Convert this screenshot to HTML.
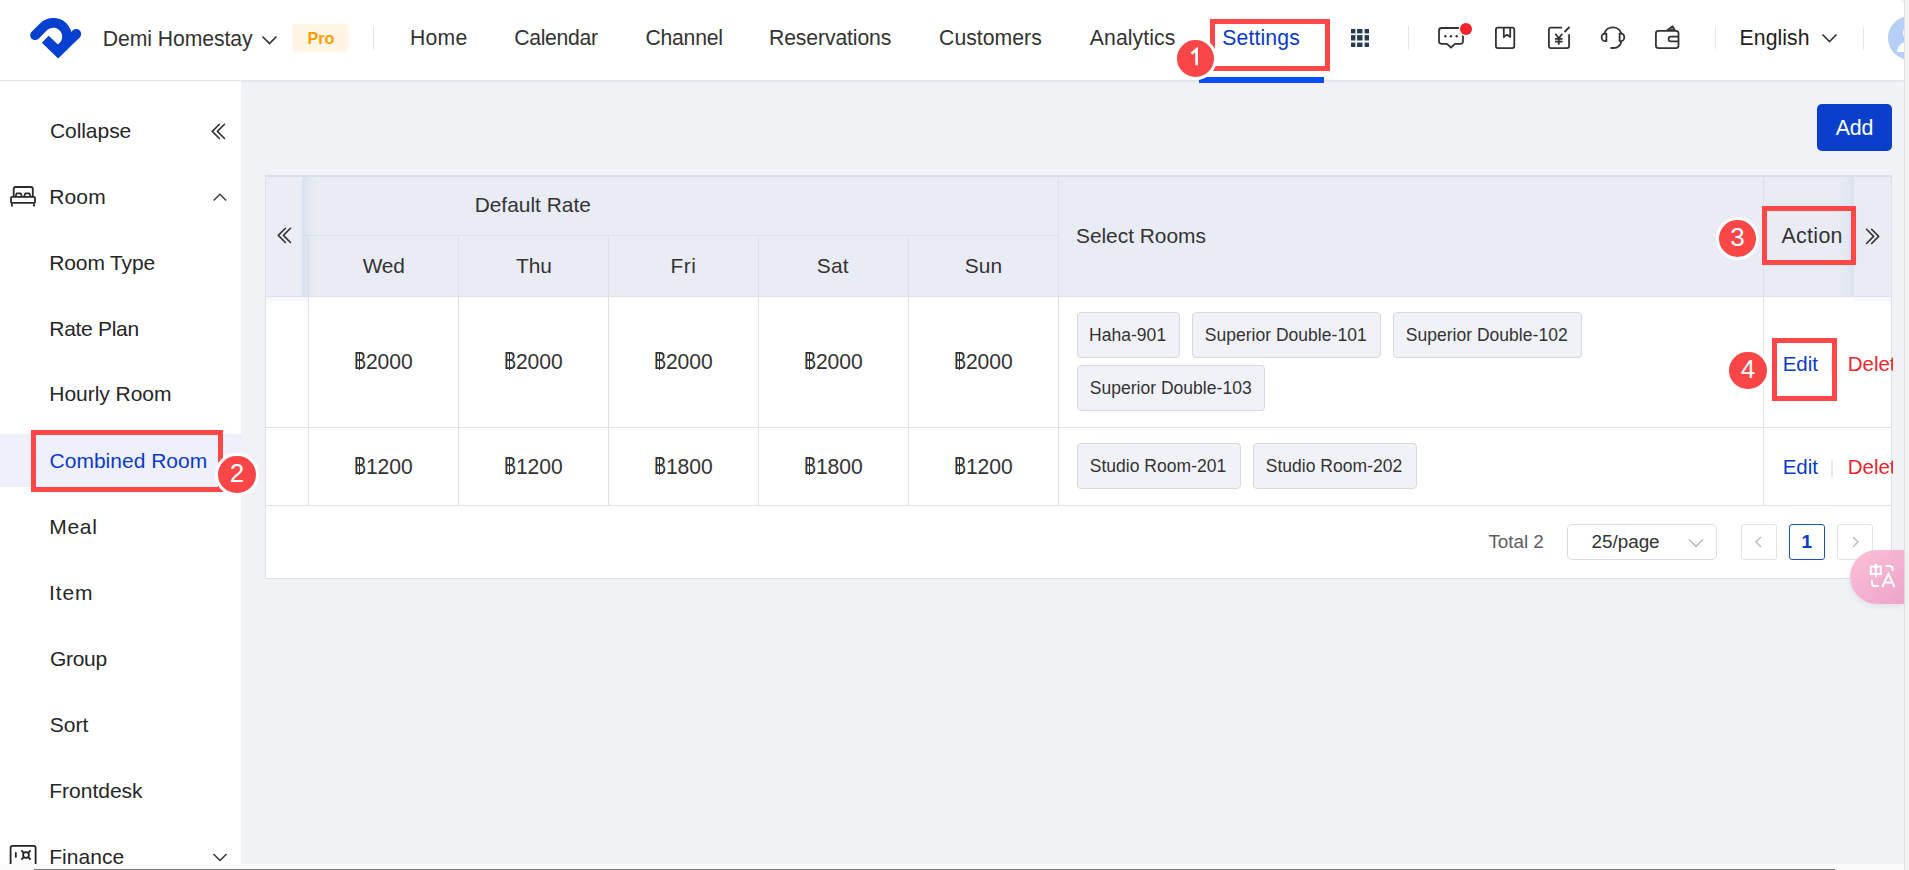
<!DOCTYPE html><html><head><meta charset="utf-8"><style>
html,body{margin:0;padding:0;width:1909px;height:870px;overflow:hidden;background:#fff}
body{position:relative;font-family:"Liberation Sans",sans-serif}
.t{position:absolute;white-space:nowrap}
.r{position:absolute}
.bm{display:inline-block;width:0;height:0;vertical-align:baseline}
</style></head><body>
<div class="r" style="left:0px;top:0px;width:1904px;height:864px;background:#f0f2f5"></div>
<div class="r" style="left:0px;top:0px;width:1904px;height:80px;background:#fff;border-bottom:1px solid #e1e4ea;border-top-right-radius:6px;box-shadow:0 1px 2px rgba(0,0,0,.05)"></div>
<svg class="r" style="left:0;top:0" width="100" height="80" viewBox="0 0 100 80">
<g fill="none" stroke="#0540d0" stroke-width="9.8">
<path d="M35.11 35.21 L43.41 26.91 A13.85 13.85 0 1 1 59.05 49.25" stroke-linecap="round"/>
<path d="M45.3 39.2 L58.1 51.6 L76.25 33.95" stroke-linecap="butt" stroke-linejoin="miter"/>
</g><circle cx="76.25" cy="33.95" r="4.9" fill="#0540d0"/></svg>
<div class="t" id="demi" style="left:102.80px;top:27.51px;font-size:21.20px;line-height:21.20px;color:#333;font-weight:normal;letter-spacing:-0.072px;">Demi Homestay<span class="bm"></span></div>
<svg class="r" style="left:260px;top:32px" width="20" height="14" viewBox="0 0 20 14"><path d="M2.5 4.5 L9.5 11.5 L16.5 4.5" fill="none" stroke="#333" stroke-width="1.6"/></svg>
<div class="r" style="left:292px;top:24px;width:57px;height:28px;background:#fff6e6;border-radius:4px"></div>
<div class="t" id="pro" style="left:307.40px;top:30.49px;font-size:16.20px;line-height:16.20px;color:#ff9d00;font-weight:bold;letter-spacing:0.000px;">Pro<span class="bm"></span></div>
<div class="r" style="left:373px;top:26px;width:1px;height:24px;background:#e3e6ec"></div>
<div class="t" id="home" style="left:409.88px;top:26.90px;font-size:21.20px;line-height:21.20px;color:#333;font-weight:normal;letter-spacing:0.283px;">Home<span class="bm"></span></div>
<div class="t" id="calendar" style="left:514.13px;top:27.11px;font-size:21.20px;line-height:21.20px;color:#333;font-weight:normal;letter-spacing:-0.290px;">Calendar<span class="bm"></span></div>
<div class="t" id="channel" style="left:645.40px;top:27.10px;font-size:21.20px;line-height:21.20px;color:#333;font-weight:normal;letter-spacing:-0.212px;">Channel<span class="bm"></span></div>
<div class="t" id="reservations" style="left:769.04px;top:27.11px;font-size:21.20px;line-height:21.20px;color:#333;font-weight:normal;letter-spacing:-0.124px;">Reservations<span class="bm"></span></div>
<div class="t" id="customers" style="left:939.12px;top:27.10px;font-size:21.20px;line-height:21.20px;color:#333;font-weight:normal;letter-spacing:0.028px;">Customers<span class="bm"></span></div>
<div class="t" id="analytics" style="left:1089.86px;top:27.11px;font-size:21.20px;line-height:21.20px;color:#333;font-weight:normal;letter-spacing:0.073px;">Analytics<span class="bm"></span></div>
<div class="t" id="settings" style="left:1222.19px;top:26.71px;font-size:21.20px;line-height:21.20px;color:#0a3acc;font-weight:normal;letter-spacing:0.146px;">Settings<span class="bm"></span></div>
<div class="r" style="left:1199px;top:77px;width:125px;height:6px;background:#0a4bff;border-radius:3px 0 0 0"></div>
<svg class="r" style="left:1350.8px;top:28.8px" width="18" height="18" viewBox="0 0 18 18"><g fill="#243a55"><rect x="0" y="0" width="4.4" height="4.4"/><rect x="6.1" y="0" width="5.4" height="4.4"/><rect x="13.6" y="0" width="4.4" height="4.4"/><rect x="0" y="6.1" width="4.4" height="5.4"/><rect x="6.1" y="6.1" width="5.4" height="5.4"/><rect x="13.6" y="6.1" width="4.4" height="5.4"/><rect x="0" y="13.6" width="4.4" height="4.4"/><rect x="6.1" y="13.6" width="5.4" height="4.4"/><rect x="13.6" y="13.6" width="4.4" height="4.4"/></g></svg>
<div class="r" style="left:1408px;top:26px;width:1px;height:24px;background:#e3e6ec"></div>
<svg class="r" style="left:1430px;top:20px" width="50" height="32" viewBox="1430 20 50 32">
<g fill="none" stroke="#333" stroke-width="1.8" stroke-linejoin="round">
<path d="M1443 43.8 H1441.5 A2.5 2.5 0 0 1 1439 41.3 V30.5 A2.5 2.5 0 0 1 1441.5 28 H1460.5 A2.5 2.5 0 0 1 1463 30.5 V41.3 A2.5 2.5 0 0 1 1460.5 43.8 H1455 L1451 47.5 L1447 43.8 Z"/>
</g>
<g fill="#333"><circle cx="1445.3" cy="36.3" r="1.2"/><circle cx="1451" cy="36.3" r="1.2"/><circle cx="1456.7" cy="36.3" r="1.2"/></g>
<circle cx="1466" cy="29" r="7.3" fill="#fff"/><circle cx="1466" cy="29" r="6" fill="#f5222d"/>
</svg>
<svg class="r" style="left:1490px;top:20px" width="32" height="34" viewBox="1490 20 32 34">
<g fill="none" stroke="#333" stroke-width="1.8" stroke-linejoin="round">
<rect x="1495.9" y="27.7" width="18.4" height="20.4" rx="2"/>
<path d="M1503.8 28 V37 L1507 34.8 L1510.2 37 V28"/>
</g></svg>
<svg class="r" style="left:1544px;top:20px" width="32" height="34" viewBox="1544 20 32 34">
<g fill="none" stroke="#333" stroke-width="1.8" stroke-linejoin="round">
<path d="M1562 27.7 H1550.9 A2 2 0 0 0 1548.9 29.7 V46.1 A2 2 0 0 0 1550.9 48.1 H1567.1 A2 2 0 0 0 1569.1 46.1 V34.2"/>
<path d="M1564.5 32 L1569.5 27"/>
<path d="M1555.3 33.8 L1558.8 38.2 L1562.3 33.8 M1555 38.8 H1562.6 M1555 41.6 H1562.6 M1558.8 38.2 V44.7"/>
</g></svg>
<svg class="r" style="left:1596px;top:20px" width="34" height="34" viewBox="1596 20 34 34">
<g fill="none" stroke="#333" stroke-width="1.8" stroke-linejoin="round" stroke-linecap="round">
<path d="M1604.3 33.4 A9.05 9.05 0 0 1 1621.3 33.4"/>
<path d="M1606.4 33.6 H1604.8 A3.1 3.75 0 0 0 1604.8 41.1 H1606.4 Z"/>
<path d="M1619.6 33.6 H1621.2 A3.1 3.75 0 0 1 1621.2 41.1 H1619.6 Z"/>
<path d="M1621.3 41.6 A7.6 7.6 0 0 1 1613.6 48 H1611.2"/>
</g></svg>
<svg class="r" style="left:1650px;top:20px" width="34" height="34" viewBox="1650 20 34 34">
<g fill="none" stroke="#333" stroke-width="1.8" stroke-linejoin="round">
<rect x="1655.9" y="30.8" width="22.6" height="17.3" rx="2.5"/>
<path d="M1678.5 36.6 H1671 A2.4 2.4 0 0 0 1671 41.4 H1678.5"/>
<path d="M1667.2 30.2 L1672.6 26.3 L1674.8 30.2 Z" fill="#aaa"/>
</g></svg>
<div class="r" style="left:1715px;top:27px;width:1px;height:22px;background:#e3e6ec"></div>
<div class="t" id="english" style="left:1739.61px;top:27.31px;font-size:21.20px;line-height:21.20px;color:#1f1f1f;font-weight:normal;letter-spacing:0.068px;">English<span class="bm"></span></div>
<svg class="r" style="left:1820px;top:31px" width="20" height="14" viewBox="0 0 20 14"><path d="M2.5 3.5 L9.5 10.5 L16.5 3.5" fill="none" stroke="#333" stroke-width="1.6"/></svg>
<div class="r" style="left:1863px;top:27px;width:1px;height:23px;background:#e3e6ec"></div>
<div class="r" style="left:1880px;top:0;width:24px;height:80px;overflow:hidden">
<svg style="position:absolute;left:8px;top:16px" width="44" height="44" viewBox="0 0 44 44"><circle cx="22" cy="22" r="22" fill="#b6cff8"/><circle cx="22" cy="17" r="7" fill="#fff"/><path d="M9 36 A13 11 0 0 1 35 36 Z" fill="#fff"/></svg></div>
<div class="r" style="left:1904px;top:0px;width:5px;height:870px;background:#f4f4f4;border-left:1px solid #e2e2e2;box-sizing:border-box"></div>
<div class="r" style="left:0px;top:864px;width:1904px;height:6px;background:#fafafa"></div>
<div class="r" style="left:34px;top:869px;width:1801px;height:1px;background:#7a7a7a"></div>
<div class="r" style="left:0px;top:81px;width:241px;height:783px;background:#fff"></div>
<div class="t" id="collapse" style="left:49.88px;top:119.50px;font-size:21.00px;line-height:21.00px;color:#262626;font-weight:normal;letter-spacing:-0.046px;">Collapse<span class="bm"></span></div>
<svg class="r" style="left:208px;top:120px" width="22" height="22" viewBox="0 0 22 22"><path d="M11.4 4.25 L4.3 11.4 L11.4 18.55 M16.5 4.25 L9.4 11.4 L16.5 18.55" fill="none" stroke="#333" stroke-width="1.6" stroke-linecap="round" stroke-linejoin="round"/></svg>
<svg class="r" style="left:5px;top:182px" width="36" height="30" viewBox="5 182 36 30">
<g fill="none" stroke="#2a2a2a" stroke-width="1.8" stroke-linejoin="round">
<path d="M13.7 196.5 V189 A2 2 0 0 1 15.7 187 H30.8 A2 2 0 0 1 32.8 189 V196.5"/>
<path d="M15.7 196 L16.7 193.3 H20.7 L21.8 196 M24.3 196 L25.3 193.3 H29.3 L30.4 196"/>
<rect x="11" y="196.9" width="24" height="6" rx="1"/>
<path d="M11.9 203.5 V206.6 M34 203.5 V206.6"/>
</g></svg>
<div class="t" id="room" style="left:49.25px;top:185.81px;font-size:21.00px;line-height:21.00px;color:#262626;font-weight:normal;letter-spacing:0.133px;">Room<span class="bm"></span></div>
<svg class="r" style="left:210px;top:189px" width="20" height="16" viewBox="0 0 20 16"><path d="M3.6 11.4 L9.9 5.2 L16.2 11.4" fill="none" stroke="#3a3a3a" stroke-width="1.4"/></svg>
<div class="r" style="left:0px;top:434px;width:241px;height:53px;background:#eef1fb"></div>
<div class="t" id="roomtype" style="left:49.30px;top:252.01px;font-size:21.00px;line-height:21.00px;color:#262626;font-weight:normal;letter-spacing:-0.147px;">Room Type<span class="bm"></span></div>
<div class="t" id="rateplan" style="left:49.35px;top:317.90px;font-size:21.00px;line-height:21.00px;color:#262626;font-weight:normal;letter-spacing:-0.301px;">Rate Plan<span class="bm"></span></div>
<div class="t" id="hourly" style="left:49.29px;top:383.40px;font-size:21.00px;line-height:21.00px;color:#262626;font-weight:normal;letter-spacing:-0.036px;">Hourly Room<span class="bm"></span></div>
<div class="t" id="combined" style="left:49.58px;top:449.90px;font-size:21.00px;line-height:21.00px;color:#0a3acc;font-weight:normal;letter-spacing:0.001px;">Combined Room<span class="bm"></span></div>
<div class="t" id="meal" style="left:49.26px;top:515.91px;font-size:21.00px;line-height:21.00px;color:#262626;font-weight:normal;letter-spacing:0.717px;">Meal<span class="bm"></span></div>
<div class="t" id="item" style="left:49.08px;top:582.21px;font-size:21.00px;line-height:21.00px;color:#262626;font-weight:normal;letter-spacing:0.825px;">Item<span class="bm"></span></div>
<div class="t" id="group" style="left:49.97px;top:647.71px;font-size:21.00px;line-height:21.00px;color:#262626;font-weight:normal;letter-spacing:-0.296px;">Group<span class="bm"></span></div>
<div class="t" id="sort" style="left:49.65px;top:713.71px;font-size:21.00px;line-height:21.00px;color:#262626;font-weight:normal;letter-spacing:0.048px;">Sort<span class="bm"></span></div>
<div class="t" id="frontdesk" style="left:49.29px;top:779.80px;font-size:21.00px;line-height:21.00px;color:#262626;font-weight:normal;letter-spacing:-0.010px;">Frontdesk<span class="bm"></span></div>
<svg class="r" style="left:5px;top:840px" width="36" height="24" viewBox="5 840 36 24">
<g fill="none" stroke="#222" stroke-width="1.8" stroke-linejoin="round">
<path d="M10.6 864 V847.8 A2 2 0 0 1 12.6 845.8 H33.6 A2 2 0 0 1 35.6 847.8 V864"/>
<path d="M15.8 852.2 V857.6"/>
<path d="M21.4 850.4 L23.6 852.6 M30.6 850.4 L28.4 852.6 M21.4 859.6 L23.6 857.4 M30.6 859.6 L28.4 857.4"/>
<circle cx="26" cy="855" r="2.9"/>
</g></svg>
<div class="t" id="finance" style="left:49.28px;top:845.90px;font-size:21.00px;line-height:21.00px;color:#262626;font-weight:normal;letter-spacing:0.018px;">Finance<span class="bm"></span></div>
<svg class="r" style="left:210px;top:850px" width="20" height="14" viewBox="0 0 20 14"><path d="M3.5 4 L10 10.5 L16.5 4" fill="none" stroke="#333" stroke-width="1.5"/></svg>
<div class="r" style="left:1817px;top:104px;width:75px;height:47px;background:#0a3fcc;border-radius:5px"></div>
<div class="t" id="add" style="left:1835.73px;top:117.80px;font-size:21.40px;line-height:21.40px;color:#fff;font-weight:normal;letter-spacing:-0.189px;">Add<span class="bm"></span></div>
<div class="r" style="left:265px;top:175px;width:1627px;height:404px;background:#fff;border:1px solid #dde2ea;box-sizing:border-box"></div>
<div class="r" style="left:266px;top:176px;width:1625px;height:120px;background:#e9ecf4"></div>
<div class="r" style="left:266px;top:176px;width:36px;height:120px;background:#eaedf5"></div>
<div class="r" style="left:302px;top:235px;width:756px;height:1px;background:#dde2ea"></div>
<div class="r" style="left:266px;top:296px;width:1625px;height:1px;background:#dde2ea"></div>
<div class="r" style="left:308px;top:236px;width:1px;height:60px;background:#dde2ea"></div>
<div class="r" style="left:458px;top:236px;width:1px;height:60px;background:#dde2ea"></div>
<div class="r" style="left:608px;top:236px;width:1px;height:60px;background:#dde2ea"></div>
<div class="r" style="left:758px;top:236px;width:1px;height:60px;background:#dde2ea"></div>
<div class="r" style="left:908px;top:236px;width:1px;height:60px;background:#dde2ea"></div>
<div class="r" style="left:1058px;top:176px;width:1px;height:120px;background:#dde2ea"></div>
<div class="r" style="left:1763px;top:176px;width:1px;height:330px;background:#dde2ea"></div>
<div class="r" style="left:308px;top:297px;width:1px;height:209px;background:#dde2ea"></div>
<div class="r" style="left:458px;top:297px;width:1px;height:209px;background:#dde2ea"></div>
<div class="r" style="left:608px;top:297px;width:1px;height:209px;background:#dde2ea"></div>
<div class="r" style="left:758px;top:297px;width:1px;height:209px;background:#dde2ea"></div>
<div class="r" style="left:908px;top:297px;width:1px;height:209px;background:#dde2ea"></div>
<div class="r" style="left:1058px;top:297px;width:1px;height:209px;background:#dde2ea"></div>
<div class="r" style="left:266px;top:427px;width:1625px;height:1px;background:#dde2ea"></div>
<div class="r" style="left:266px;top:505px;width:1625px;height:1px;background:#dde2ea"></div>
<div class="r" style="left:302px;top:176px;width:15px;height:120px;background:linear-gradient(90deg,rgba(140,155,205,.15),rgba(140,155,205,.05) 50%,rgba(140,155,205,0))"></div>
<div class="r" style="left:1839px;top:176px;width:15px;height:120px;background:linear-gradient(270deg,rgba(140,155,205,.15),rgba(140,155,205,.05) 50%,rgba(140,155,205,0))"></div>
<div class="r" style="left:265px;top:175px;width:1627px;height:2px;background:#d9dde6"></div>
<div class="r" style="left:266px;top:297px;width:42px;height:9px;background:linear-gradient(180deg,rgba(140,155,205,.10),rgba(140,155,205,0))"></div>
<div class="r" style="left:1854px;top:297px;width:37px;height:9px;background:linear-gradient(180deg,rgba(140,155,205,.10),rgba(140,155,205,0))"></div>
<svg class="r" style="left:274.2px;top:224.3px" width="22" height="22" viewBox="0 0 22 22"><path d="M11.4 4.25 L4.3 11.4 L11.4 18.55 M16.5 4.25 L9.4 11.4 L16.5 18.55" fill="none" stroke="#333" stroke-width="1.6" stroke-linecap="round" stroke-linejoin="round"/></svg>
<div class="t" id="defaultrate" style="left:474.63px;top:194.91px;font-size:20.90px;line-height:20.90px;color:#333;font-weight:normal;letter-spacing:0.018px;">Default Rate<span class="bm"></span></div>
<div class="t" id="wed" style="left:362.63px;top:256.21px;font-size:20.90px;line-height:20.90px;color:#333;font-weight:normal;letter-spacing:-0.212px;">Wed<span class="bm"></span></div>
<div class="t" id="thu" style="left:515.91px;top:256.21px;font-size:20.90px;line-height:20.90px;color:#333;font-weight:normal;letter-spacing:-0.036px;">Thu<span class="bm"></span></div>
<div class="t" id="fri" style="left:670.48px;top:256.21px;font-size:20.90px;line-height:20.90px;color:#333;font-weight:normal;letter-spacing:0.488px;">Fri<span class="bm"></span></div>
<div class="t" id="sat" style="left:816.81px;top:256.21px;font-size:20.90px;line-height:20.90px;color:#333;font-weight:normal;letter-spacing:0.180px;">Sat<span class="bm"></span></div>
<div class="t" id="sun" style="left:964.64px;top:256.21px;font-size:20.90px;line-height:20.90px;color:#333;font-weight:normal;letter-spacing:0.153px;">Sun<span class="bm"></span></div>
<div class="t" id="selectrooms" style="left:1075.96px;top:225.60px;font-size:20.90px;line-height:20.90px;color:#333;font-weight:normal;letter-spacing:-0.010px;">Select Rooms<span class="bm"></span></div>
<div class="t" id="action" style="left:1781.53px;top:225.81px;font-size:21.40px;line-height:21.40px;color:#333;font-weight:normal;letter-spacing:0.303px;">Action<span class="bm"></span></div>
<svg class="r" style="left:1860.7px;top:224.6px" width="22" height="22" viewBox="0 0 22 22"><path d="M10.6 4.25 L17.7 11.4 L10.6 18.55 M5.5 4.25 L12.6 11.4 L5.5 18.55" fill="none" stroke="#333" stroke-width="1.6" stroke-linecap="round" stroke-linejoin="round"/></svg>
<div class="t" style="left:353.50px;top:350.85px;font-size:21.2px;line-height:21.2px;color:#333;transform:scale(0.86,1.10);transform-origin:0 17.95px">B</div>
<div class="r" style="left:359.00px;top:351.80px;width:1.4px;height:18.3px;background:#333"></div>
<div class="t" style="left:365.90px;top:350.94px;font-size:21.1px;line-height:21.1px;color:#333;transform:scaleY(1.07);transform-origin:0 17.86px">2000</div>
<div class="t" style="left:503.50px;top:350.85px;font-size:21.2px;line-height:21.2px;color:#333;transform:scale(0.86,1.10);transform-origin:0 17.95px">B</div>
<div class="r" style="left:509.00px;top:351.80px;width:1.4px;height:18.3px;background:#333"></div>
<div class="t" style="left:515.90px;top:350.94px;font-size:21.1px;line-height:21.1px;color:#333;transform:scaleY(1.07);transform-origin:0 17.86px">2000</div>
<div class="t" style="left:653.50px;top:350.85px;font-size:21.2px;line-height:21.2px;color:#333;transform:scale(0.86,1.10);transform-origin:0 17.95px">B</div>
<div class="r" style="left:659.00px;top:351.80px;width:1.4px;height:18.3px;background:#333"></div>
<div class="t" style="left:665.90px;top:350.94px;font-size:21.1px;line-height:21.1px;color:#333;transform:scaleY(1.07);transform-origin:0 17.86px">2000</div>
<div class="t" style="left:803.50px;top:350.85px;font-size:21.2px;line-height:21.2px;color:#333;transform:scale(0.86,1.10);transform-origin:0 17.95px">B</div>
<div class="r" style="left:809.00px;top:351.80px;width:1.4px;height:18.3px;background:#333"></div>
<div class="t" style="left:815.90px;top:350.94px;font-size:21.1px;line-height:21.1px;color:#333;transform:scaleY(1.07);transform-origin:0 17.86px">2000</div>
<div class="t" style="left:953.50px;top:350.85px;font-size:21.2px;line-height:21.2px;color:#333;transform:scale(0.86,1.10);transform-origin:0 17.95px">B</div>
<div class="r" style="left:959.00px;top:351.80px;width:1.4px;height:18.3px;background:#333"></div>
<div class="t" style="left:965.90px;top:350.94px;font-size:21.1px;line-height:21.1px;color:#333;transform:scaleY(1.07);transform-origin:0 17.86px">2000</div>
<div class="t" style="left:353.50px;top:455.85px;font-size:21.2px;line-height:21.2px;color:#333;transform:scale(0.86,1.10);transform-origin:0 17.95px">B</div>
<div class="r" style="left:359.00px;top:456.80px;width:1.4px;height:18.3px;background:#333"></div>
<div class="t" style="left:365.90px;top:455.94px;font-size:21.1px;line-height:21.1px;color:#333;transform:scaleY(1.07);transform-origin:0 17.86px">1200</div>
<div class="t" style="left:503.50px;top:455.85px;font-size:21.2px;line-height:21.2px;color:#333;transform:scale(0.86,1.10);transform-origin:0 17.95px">B</div>
<div class="r" style="left:509.00px;top:456.80px;width:1.4px;height:18.3px;background:#333"></div>
<div class="t" style="left:515.90px;top:455.94px;font-size:21.1px;line-height:21.1px;color:#333;transform:scaleY(1.07);transform-origin:0 17.86px">1200</div>
<div class="t" style="left:653.50px;top:455.85px;font-size:21.2px;line-height:21.2px;color:#333;transform:scale(0.86,1.10);transform-origin:0 17.95px">B</div>
<div class="r" style="left:659.00px;top:456.80px;width:1.4px;height:18.3px;background:#333"></div>
<div class="t" style="left:665.90px;top:455.94px;font-size:21.1px;line-height:21.1px;color:#333;transform:scaleY(1.07);transform-origin:0 17.86px">1800</div>
<div class="t" style="left:803.50px;top:455.85px;font-size:21.2px;line-height:21.2px;color:#333;transform:scale(0.86,1.10);transform-origin:0 17.95px">B</div>
<div class="r" style="left:809.00px;top:456.80px;width:1.4px;height:18.3px;background:#333"></div>
<div class="t" style="left:815.90px;top:455.94px;font-size:21.1px;line-height:21.1px;color:#333;transform:scaleY(1.07);transform-origin:0 17.86px">1800</div>
<div class="t" style="left:953.50px;top:455.85px;font-size:21.2px;line-height:21.2px;color:#333;transform:scale(0.86,1.10);transform-origin:0 17.95px">B</div>
<div class="r" style="left:959.00px;top:456.80px;width:1.4px;height:18.3px;background:#333"></div>
<div class="t" style="left:965.90px;top:455.94px;font-size:21.1px;line-height:21.1px;color:#333;transform:scaleY(1.07);transform-origin:0 17.86px">1200</div>
<div class="r" style="left:1077px;top:312px;width:103px;height:46.4px;background:#f0f2f7;border:1px solid #d5d9e2;border-radius:4px;box-sizing:border-box"></div>
<div class="t" id="tag_haha" style="left:1089.03px;top:327.30px;font-size:17.50px;line-height:17.50px;color:#333;font-weight:normal;letter-spacing:0.034px;">Haha-901<span class="bm"></span></div>
<div class="r" style="left:1192px;top:312px;width:189px;height:46.4px;background:#f0f2f7;border:1px solid #d5d9e2;border-radius:4px;box-sizing:border-box"></div>
<div class="t" id="tag_sd101" style="left:1204.71px;top:327.31px;font-size:17.50px;line-height:17.50px;color:#333;font-weight:normal;letter-spacing:0.025px;">Superior Double-101<span class="bm"></span></div>
<div class="r" style="left:1393px;top:312px;width:189px;height:46.4px;background:#f0f2f7;border:1px solid #d5d9e2;border-radius:4px;box-sizing:border-box"></div>
<div class="t" style="left:1405.71px;top:327.31px;font-size:17.50px;line-height:17.50px;color:#333;font-weight:normal;letter-spacing:0.025px;">Superior Double-102<span class="bm"></span></div>
<div class="r" style="left:1077px;top:365px;width:188px;height:46.4px;background:#f0f2f7;border:1px solid #d5d9e2;border-radius:4px;box-sizing:border-box"></div>
<div class="t" style="left:1089.71px;top:380.31px;font-size:17.50px;line-height:17.50px;color:#333;font-weight:normal;letter-spacing:0.025px;">Superior Double-103<span class="bm"></span></div>
<div class="r" style="left:1077px;top:443px;width:164px;height:46.4px;background:#f0f2f7;border:1px solid #d5d9e2;border-radius:4px;box-sizing:border-box"></div>
<div class="t" style="left:1089.71px;top:458.31px;font-size:17.50px;line-height:17.50px;color:#333;font-weight:normal;letter-spacing:0.025px;">Studio Room-201<span class="bm"></span></div>
<div class="r" style="left:1253px;top:443px;width:164px;height:46.4px;background:#f0f2f7;border:1px solid #d5d9e2;border-radius:4px;box-sizing:border-box"></div>
<div class="t" style="left:1265.71px;top:458.31px;font-size:17.50px;line-height:17.50px;color:#333;font-weight:normal;letter-spacing:0.025px;">Studio Room-202<span class="bm"></span></div>
<div class="t" id="edit1" style="left:1782.70px;top:353.85px;font-size:20.50px;line-height:20.50px;color:#0a3acc;font-weight:normal;letter-spacing:0.000px;">Edit<span class="bm"></span></div>
<div class="t" style="left:1847.70px;top:353.85px;font-size:20.50px;line-height:20.50px;color:#e8262e;font-weight:normal;letter-spacing:0.000px;width:45px;overflow:hidden">Delete<span class="bm"></span></div>
<div class="t" style="left:1782.70px;top:457.35px;font-size:20.50px;line-height:20.50px;color:#0a3acc;font-weight:normal;letter-spacing:0.000px;">Edit<span class="bm"></span></div>
<div class="r" style="left:1831px;top:459.5px;width:2px;height:17.5px;background:#e8e8e8"></div>
<div class="r" style="left:1831px;top:356px;width:2px;height:17px;background:#e8e8e8"></div>
<div class="t" style="left:1847.70px;top:457.35px;font-size:20.50px;line-height:20.50px;color:#e8262e;font-weight:normal;letter-spacing:0.000px;width:45px;overflow:hidden">Delete<span class="bm"></span></div>
<div class="t" id="total" style="left:1488.43px;top:533.21px;font-size:18.90px;line-height:18.90px;color:#5c5e63;font-weight:normal;letter-spacing:-0.045px;">Total 2<span class="bm"></span></div>
<div class="r" style="left:1567px;top:524px;width:150px;height:36px;background:#fff;border:1px solid #d9dde6;border-radius:5px;box-sizing:border-box"></div>
<div class="t" id="perpage" style="left:1591.62px;top:532.90px;font-size:18.90px;line-height:18.90px;color:#333;font-weight:normal;letter-spacing:-0.046px;">25/page<span class="bm"></span></div>
<svg class="r" style="left:1686px;top:535.5px" width="20" height="14" viewBox="0 0 20 14"><path d="M3 3.5 L10 10.5 L17 3.5" fill="none" stroke="#b4b4b4" stroke-width="1.3"/></svg>
<div class="r" style="left:1741px;top:524px;width:36px;height:36px;background:#fff;border:1px solid #e1e4ea;border-radius:3px;box-sizing:border-box"></div>
<svg class="r" style="left:1750px;top:533px" width="18" height="18" viewBox="0 0 18 18"><path d="M11 4 L6 9 L11 14" fill="none" stroke="#bbb" stroke-width="1.4"/></svg>
<div class="r" style="left:1789px;top:524px;width:36px;height:36px;background:#fff;border:1.5px solid #1f4fd1;border-radius:3px;box-sizing:border-box"></div>
<div class="t" id="page1" style="left:1801.50px;top:531.82px;font-size:19.00px;line-height:19.00px;color:#0a3acc;font-weight:bold;letter-spacing:0.000px;">1<span class="bm"></span></div>
<div class="r" style="left:1837px;top:524px;width:36px;height:36px;background:#fff;border:1px solid #e1e4ea;border-radius:3px;box-sizing:border-box"></div>
<svg class="r" style="left:1846px;top:533px" width="18" height="18" viewBox="0 0 18 18"><path d="M7 4 L12 9 L7 14" fill="none" stroke="#bbb" stroke-width="1.4"/></svg>
<div class="r" style="left:1850px;top:550px;width:54px;height:54px;border-radius:27px 0 0 27px;background:linear-gradient(135deg,rgba(250,186,214,.9),rgba(238,156,194,.9));box-shadow:0 2px 6px rgba(0,0,0,.08)"></div>
<svg class="r" style="left:1860px;top:558px" width="44" height="34" viewBox="1860 558 44 34"><g fill="none" stroke="#fff" stroke-width="2">
<rect x="1870.8" y="566.6" width="10" height="7.4"/><path d="M1875.8 563.7 V577.4"/><path d="M1885.5 566 H1890 A2.5 2.5 0 0 1 1892.5 568.5 V571"/><path d="M1872 580 V583.5 A2.5 2.5 0 0 0 1874.5 586 H1879"/><path d="M1882.3 587 L1888.4 573.8 L1894.5 587 M1884.3 582.6 H1892.5"/></g></svg>
<div class="r" style="left:1209.5px;top:19px;width:120px;height:52px;border:5px solid #ff4747;box-sizing:border-box"></div>
<div class="r" style="left:1174.1px;top:36.5px;width:37.2px;height:37.2px;border:3.9px solid #fff;border-radius:50%;background:#fa4646;color:#fff;font-size:26px;line-height:34.5px;text-align:center"></div>
<svg class="r" style="left:1185px;top:44px" width="20" height="24" viewBox="1185 44 20 24"><path d="M1191.4 53.6 L1196.6 49.5 V65.2" fill="none" stroke="#fff" stroke-width="2.7"/></svg>
<div class="r" style="left:30.5px;top:430px;width:192px;height:62px;border:5px solid #ff4747;box-sizing:border-box"></div>
<div class="r" style="left:215.4px;top:452.6px;width:37.2px;height:37.2px;border:3.9px solid #fff;border-radius:50%;background:#fa4646;color:#fff;font-size:26px;line-height:34.5px;text-align:center">2</div>
<div class="r" style="left:1762px;top:206px;width:94px;height:59px;border:5px solid #ff4747;box-sizing:border-box"></div>
<div class="r" style="left:1716.0px;top:216.7px;width:37.2px;height:37.2px;border:3.9px solid #fff;border-radius:50%;background:#fa4646;color:#fff;font-size:26px;line-height:34.5px;text-align:center">3</div>
<div class="r" style="left:1772px;top:338px;width:65px;height:63px;border:5px solid #ff4747;box-sizing:border-box"></div>
<div class="r" style="left:1726.4px;top:348.5px;width:37.2px;height:37.2px;border:3.9px solid #fff;border-radius:50%;background:#fa4646;color:#fff;font-size:26px;line-height:34.5px;text-align:center">4</div>
</body></html>
